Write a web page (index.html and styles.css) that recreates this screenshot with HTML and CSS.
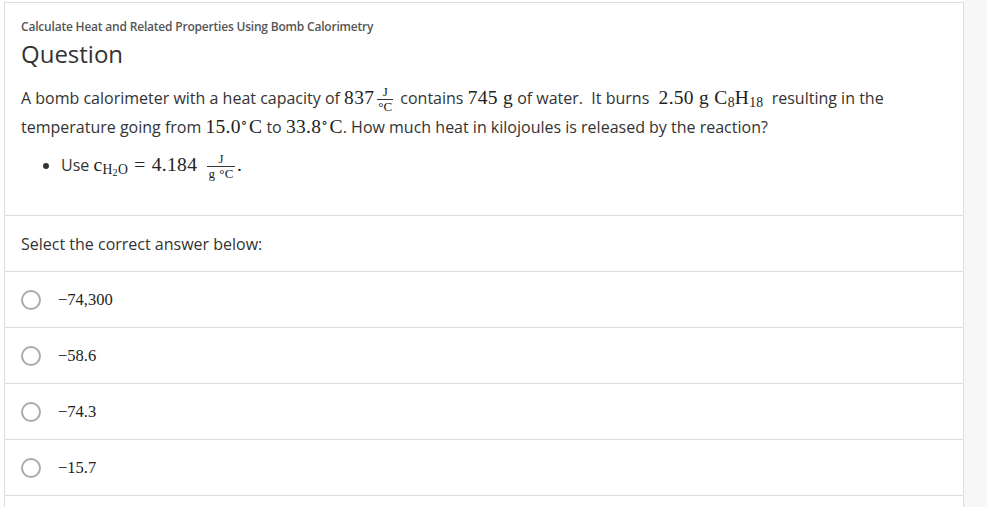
FILE: index.html
```html
<!DOCTYPE html>
<html lang="en">
<head>
<meta charset="utf-8">
<title>Question</title>
<link rel="stylesheet" href="styles.css">
</head>
<body>
<div class="page">
  <main class="card">
    <section class="question">
      <div class="crumb">Calculate Heat and Related Properties Using Bomb Calorimetry</div>
      <h1 class="title">Question</h1>
      <p class="stem">A bomb calorimeter with a heat capacity of <span class="m">837<span class="frac"><span class="num">J</span><span class="den">°C</span></span></span> contains <span class="m">745&nbsp;g</span> of water.&nbsp; It burns <span class="m">&nbsp;2.50&nbsp;g&nbsp;C<sub>8</sub>H<sub>18</sub></span>&nbsp; resulting in the temperature going from <span class="m">15.0<sup class="deg">∘</sup>C</span> to <span class="m">33.8<sup class="deg">∘</sup>C</span>. How much heat in kilojoules is released by the reaction?</p>
      <ul class="hints">
        <li>Use <span class="m">c<sub>H<sub class="s2">2</sub>O</sub> <span class="op">=</span> 4.184 <span class="frac wide"><span class="num">J</span><span class="den">g&nbsp;°C</span></span>.</span></li>
      </ul>
    </section>
    <div class="prompt">Select the correct answer below:</div>
    <label class="option"><span class="radio"></span><span class="ans">−74,300</span></label>
    <label class="option"><span class="radio"></span><span class="ans">−58.6</span></label>
    <label class="option"><span class="radio"></span><span class="ans">−74.3</span></label>
    <label class="option"><span class="radio"></span><span class="ans">−15.7</span></label>
    <div class="tail"></div>
  </main>
  <aside class="side"></aside>
</div>
</body>
</html>
```
FILE: styles.css
```css
html, body {
  margin: 0;
  padding: 0;
  background: #fff;
  height: 100%;
  overflow: hidden;
}
body {
  font-family: "Open Sans", "Liberation Sans", sans-serif;
  color: #333;
}
.page {
  display: flex;
  min-height: 100%;
}
.card {
  width: 958px;
  margin: 2px 0 0 4px;
  border: 1px solid #dddddd;
  border-bottom: none;
  background: #fff;
  flex: none;
}
.side {
  flex: 1;
  background: #f7f7f7;
}
.question {
  padding: 16px 16px 0 16px;
  height: 196px;
  border-bottom: 1px solid #dddddd;
  box-sizing: content-box;
}
.crumb {
  font-size: 12px;
  line-height: 16px;
  font-weight: 600;
  color: #555;
  letter-spacing: -0.2px;
}
.title {
  margin: 3px 0 0;
  font-size: 24px;
  line-height: 32px;
  font-weight: 400;
  color: #333;
}
.stem {
  margin: 14px 0 0;
  font-size: 16px;
  line-height: 28px;
}
.m {
  font-family: "Liberation Serif", "DejaVu Serif", serif;
  font-size: 19.5px;
  line-height: 1;
  letter-spacing: 0.3px;
  color: #222;
  white-space: nowrap;
}
.m sub {
  font-size: 0.7em;
  vertical-align: -0.25em;
  line-height: 0;
}
.m sub .s2 {
  font-size: 0.75em;
  vertical-align: -0.2em;
}
.m .deg {
  font-size: 0.72em;
  vertical-align: 0.45em;
  line-height: 0;
  margin-right: 1px;
}
.m .op {
  margin: 0 1px;
}
.frac {
  display: inline-flex;
  flex-direction: column;
  align-items: stretch;
  text-align: center;
  font-size: 13px;
  line-height: 1;
  vertical-align: 8px;
  margin: 0 3px;
  letter-spacing: 0;
}
.frac.wide {
  margin: 0 2px 0 5px;
  letter-spacing: 0.5px;
}
.frac .num {
  border-bottom: 1px solid #333;
  padding: 0 1px 1px;
}
.frac .den {
  padding: 0 1px;
}
.hints {
  margin: 10px 0 0;
  padding-left: 40px;
  font-size: 16px;
  line-height: 28px;
}
.prompt {
  height: 55px;
  display: flex;
  align-items: center;
  padding: 0 16px;
  font-size: 16px;
  border-bottom: 1px solid #dddddd;
}
.option {
  height: 55px;
  display: flex;
  align-items: center;
  padding: 0 16px;
  border-bottom: 1px solid #dddddd;
  cursor: pointer;
}
.radio {
  width: 16px;
  height: 16px;
  border: 2px solid #aaaaaa;
  border-radius: 50%;
  flex: none;
}
.ans {
  margin-left: 17px;
  font-family: "Liberation Serif", "DejaVu Serif", serif;
  font-size: 16.5px;
  color: #222;
}
.tail {
  height: 40px;
}
```
